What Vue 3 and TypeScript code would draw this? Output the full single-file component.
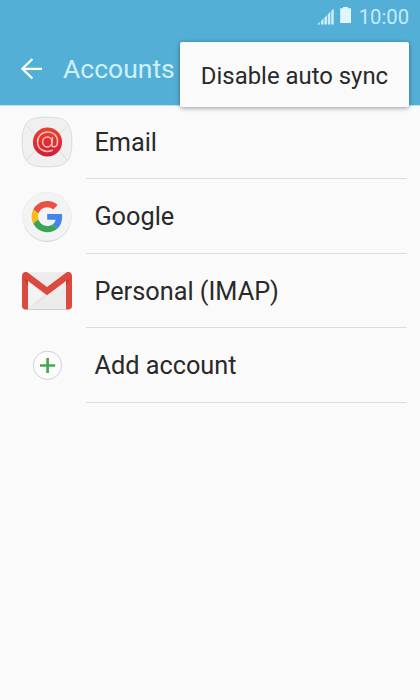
<script setup lang="ts">
interface Account {
  id: 'email' | 'google' | 'imap' | 'add'
  label: string
}

const time = '10:00'
const accounts: Account[] = [
  { id: 'email', label: 'Email' },
  { id: 'google', label: 'Google' },
  { id: 'imap', label: 'Personal (IMAP)' },
  { id: 'add', label: 'Add account' },
]
</script>

<template>
  <div class="screen">
    <header class="header">
      <div class="status">
        <svg class="signal" width="18" height="17" viewBox="0 0 18 17">
          <path d="M.3 16.500 2.800 14v2.500zM4 16.500v-3.500l2.500-2.500v6zM7.400 16.500v-6.800l2.500-2.500v9.300zM10.800 16.500v-10.200l2.500-2.500v12.700zM14.200 16.500v-13.500l2.500-2.500v16z" fill="#cdedfa" />
        </svg>
        <svg class="battery" width="12" height="17" viewBox="0 0 12 17">
          <path d="M3 0h5v1.300h3v14.700h-10.800v-14.700h2.800z" fill="#e1f5fd" />
        </svg>
        <span class="time">{{ time }}</span>
      </div>
      <div class="toolbar">
        <svg class="back" width="24" height="24" viewBox="0 0 24 24" fill="none" stroke="#fff" stroke-width="2.300">
          <path d="M13.400 2 3.400 11.800l10 9.700M3.800 11.800H23" />
        </svg>
        <h1 class="title">Accounts</h1>
      </div>
      <button class="menu" type="button">Disable auto sync</button>
    </header>

    <ul class="list">
      <li v-for="account in accounts" :key="account.id" class="row">
        <div class="icon">
          <svg v-if="account.id === 'email'" width="54" height="54" viewBox="0 0 54 54">
            <defs>
              <linearGradient id="red" x1="0" y1="0" x2="0" y2="1">
                <stop offset="0" stop-color="#ee4030" />
                <stop offset="1" stop-color="#cf1e38" />
              </linearGradient>
            </defs>
            <path d="M27 2.200C44 2.200 51.800 5 51.800 27S44 51.800 27 51.800 2.200 49 2.200 27 10 2.200 27 2.200z" fill="#f0f0f0" stroke="#dcdcdc" />
            <path d="M6.500 10.500 22 27 6.500 45.500M47.500 10.500 32 27l15.500 18.500" fill="none" stroke="#dcdcdc" />
            <circle cx="27.500" cy="27" r="14.600" fill="url(#red)" />
            <g fill="none" stroke="#ffc3b8" stroke-width="1.500" stroke-linecap="round">
              <path d="M32.300 35.300C26 38.300 17.600 35 17.600 27 17.600 21.200 22 17 27.700 17c5.700 0 9.800 3.700 9.800 9.200 0 3.600-1.600 5.600-3.500 5.600-1.800 0-2.400-1.300-2.200-2.900l.7-6.300" />
              <ellipse cx="27.300" cy="27" rx="4.700" ry="4.900" />
            </g>
          </svg>

          <svg v-else-if="account.id === 'google'" width="54" height="54" viewBox="0 0 54 54">
            <circle cx="27" cy="27.700" r="24.200" fill="#d0d0d0" />
            <circle cx="27" cy="26.500" r="24.400" fill="#f3f3f3" stroke="#e9e9e9" stroke-width=".6" />
            <g transform="translate(11.600 11) scale(.65)">
              <path fill="#ea5042" d="M24 9.500c3.540 0 6.710 1.220 9.210 3.600l6.850-6.850C35.900 2.380 30.470 0 24 0 14.620 0 6.510 5.380 2.560 13.220l7.980 6.190C12.430 13.720 17.740 9.500 24 9.500z" />
              <path fill="#4285ed" d="M46.980 24.550c0-1.570-.15-3.090-.38-4.550H24v9.020h12.940c-.58 2.960-2.260 5.480-4.780 7.180l7.730 6c4.510-4.180 7.090-10.360 7.090-17.650z" />
              <path fill="#f9bb16" d="M10.530 28.590A14.500 14.500 0 0 1 9.770 24c0-1.600.27-3.140.76-4.590l-7.980-6.190A24 24 0 0 0 0 24c0 3.880.92 7.540 2.560 10.780z" />
              <path fill="#38a457" d="M24 48c6.480 0 11.930-2.130 15.890-5.810l-7.730-6c-2.150 1.450-4.920 2.300-8.160 2.300-6.260 0-11.570-4.220-13.470-9.910l-7.980 6.190C6.510 42.620 14.620 48 24 48z" />
            </g>
          </svg>

          <svg v-else-if="account.id === 'imap'" width="54" height="54" viewBox="0 0 54 54">
            <path d="M4 8.500h46v37H4z" fill="#ececec" />
            <path d="M8 45.500 24 31l3 1.500z" fill="#e4e4e4" />
            <path d="M8 16v28l16-13z" fill="#f3f3f3" />
            <path d="M7 8.500h40L27 25z" fill="#ececec" />
            <path d="M8 45.500h38" stroke="#cfcfcf" />
            <path d="M2 12.500C2 9.500 3.500 8.100 5.500 8.100c1.300 0 2.200.4 3.200 1.200L27 23 45.300 9.300c1-.8 1.900-1.200 3.200-1.200 2 0 3.500 1.400 3.500 4.400v29.500c0 2.300-1.300 3.500-3.500 3.500H46V17L27 31.200 8 17v28.500H5.500C3.300 45.500 2 44.300 2 42z" fill="#dc4a3f" />
            <path d="M3 13.500l5 3.500v5zM51 13.500l-5 3.500v5z" fill="#c53b34" />
          </svg>

          <svg v-else width="54" height="54" viewBox="0 0 54 54">
            <circle cx="27.500" cy="27.300" r="14.100" fill="#fdfdfd" stroke="#d0d0d0" />
            <path d="M27.600 20v15M20 27.500h15.200" stroke="#43a84d" stroke-width="2.700" fill="none" />
          </svg>
        </div>
        <div class="label">{{ account.label }}</div>
      </li>
    </ul>
  </div>
</template>

<style>
body {
  margin: 0;
  background: #fafafa;
}
</style>

<style scoped>
.screen {
  width: 420px;
  height: 700px;
  overflow: hidden;
  background: #fafafa;
  color: #292929;
  font-family: Roboto, sans-serif;
}

.header {
  position: relative;
  box-sizing: border-box;
  height: 105px;
  background: #54afd6;
  box-shadow: 0 1px 0 #b9e0f0;
}

.status {
  display: flex;
  justify-content: flex-end;
  align-items: center;
  height: 33px;
  padding-right: 11px;
}

.signal {
  margin-right: 5px;
}

.battery {
  margin-right: 7px;
  margin-bottom: 2px;
}

.time {
  color: #c5eafa;
  font-size: 20.2px;
  line-height: 34px;
}

.toolbar {
  display: flex;
  align-items: center;
  height: 72px;
  padding-left: 19px;
}

.title {
  margin: 0 0 0 20px;
  color: #ceeffc;
  font-size: 26.5px;
  font-weight: 400;
  line-height: 72px;
}

.menu {
  position: absolute;
  top: 42px;
  right: 11px;
  width: 229px;
  height: 65px;
  padding: 3px 0 0;
  border: 0;
  border-radius: 2px;
  background: #fafafa;
  box-shadow: 0 1px 5px rgba(0, 0, 0, 0.4);
  color: #292929;
  font-family: inherit;
  font-size: 23.9px;
  text-align: center;
  white-space: nowrap;
}

.list {
  margin: 0;
  padding: 0;
  list-style: none;
}

.row {
  display: flex;
  height: 74.4px;
  padding: 0 13px 0 20px;
}

.icon {
  display: flex;
  align-items: center;
  width: 66px;
}

.icon svg {
  display: block;
}

.label {
  flex: 1;
  box-sizing: border-box;
  padding-left: 8.4px;
  border-bottom: 1px solid #dcdcdc;
  font-size: 25.3px;
  line-height: 76.5px;
}
</style>
